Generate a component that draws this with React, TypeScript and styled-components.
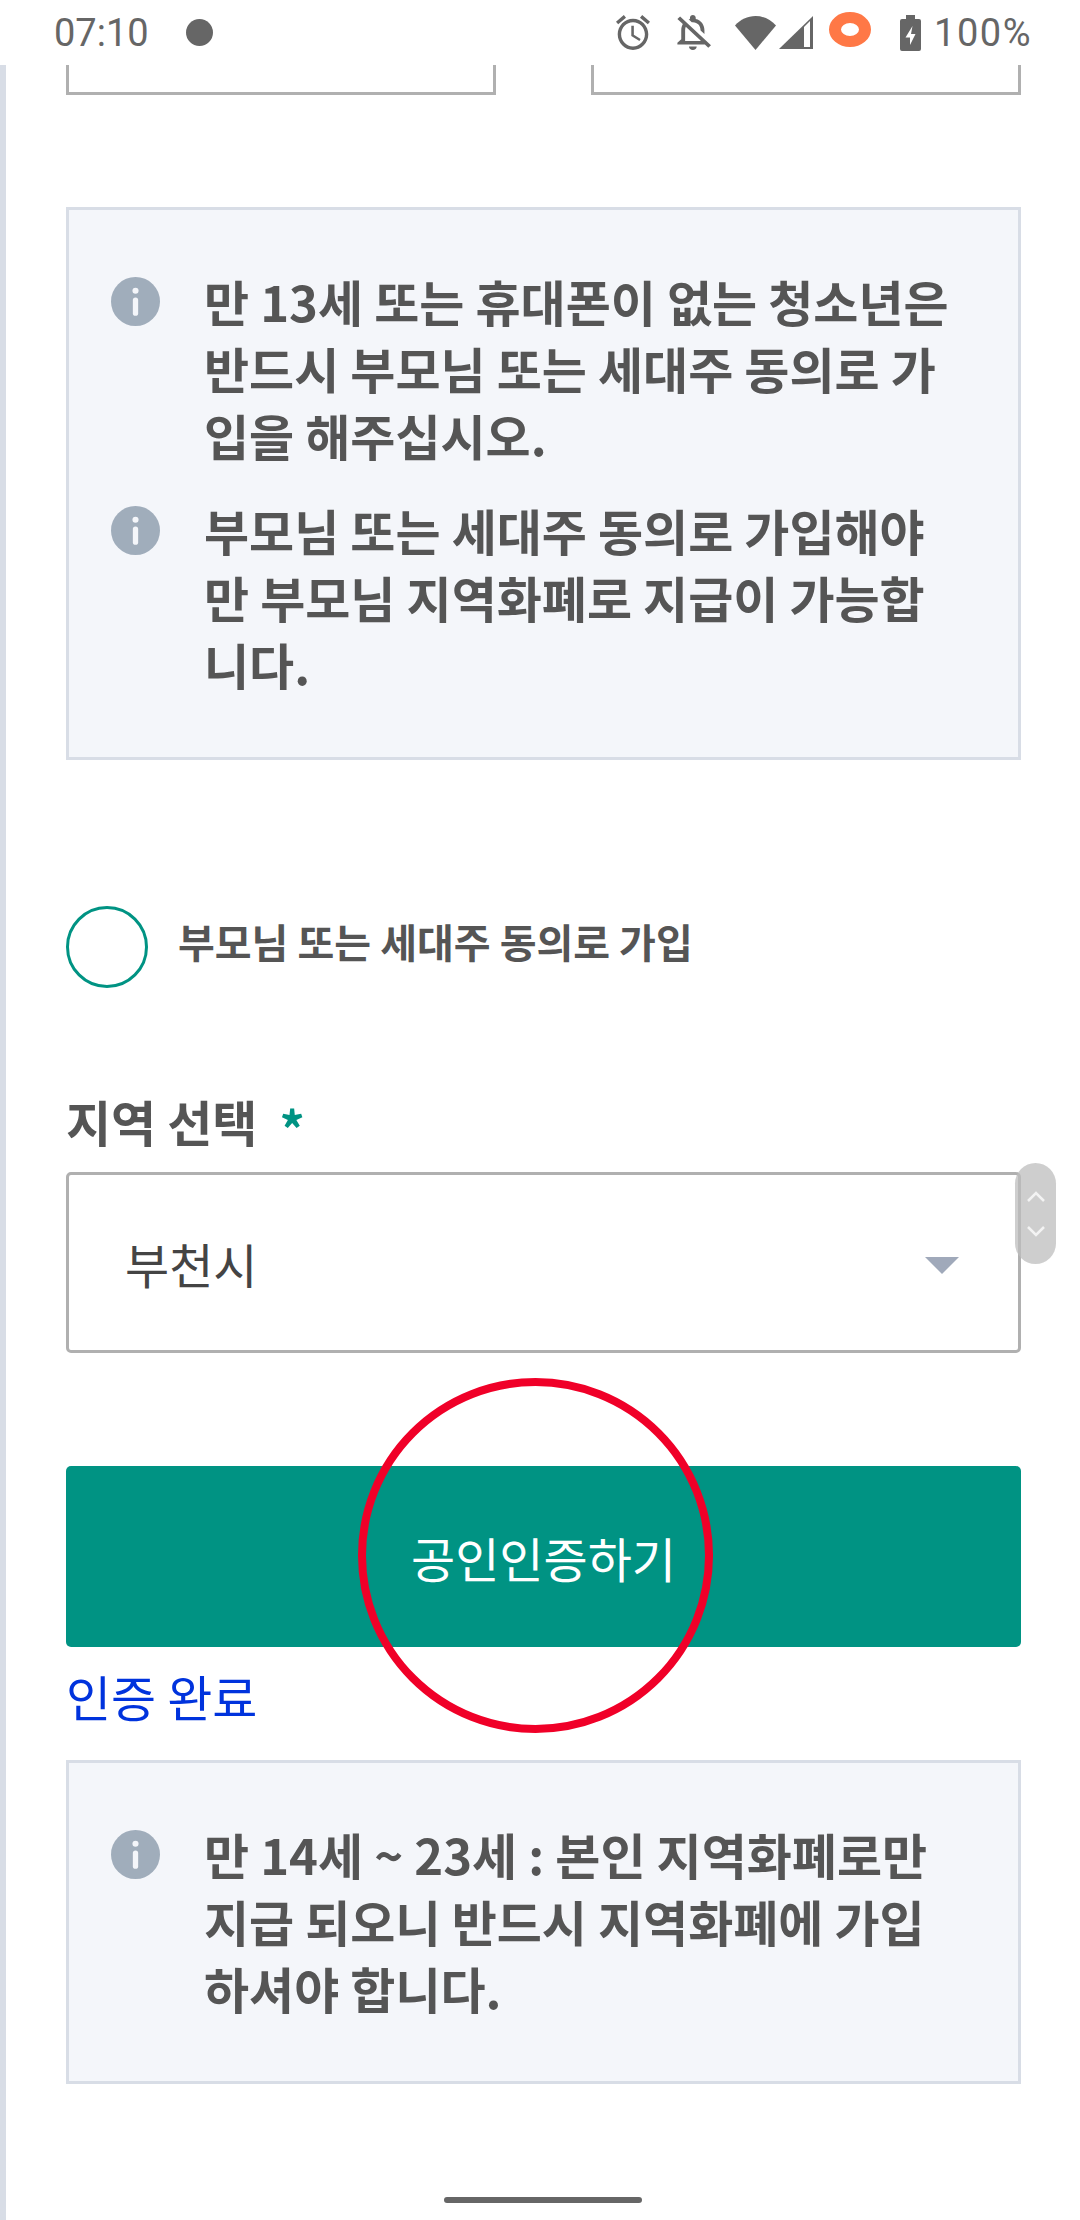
import styled, { createGlobalStyle } from 'styled-components'

const GlobalStyle = createGlobalStyle`
  html, body {
    margin: 0;
    padding: 0;
    background: #ffffff;
  }
  * {
    box-sizing: border-box;
  }
`

const KR = `"Noto Sans CJK KR", "Noto Sans", sans-serif`

const InfoIcon = () => (
  <InfoSvg viewBox="0 0 48 48">
    <circle cx="24" cy="24" r="24" fill="#a0adbb" />
    <circle cx="24" cy="13.5" r="3" fill="#f4f6fa" />
    <rect x="21.4" y="20" width="5.2" height="18" rx="2.6" fill="#f4f6fa" />
  </InfoSvg>
)

const Notes = ({ items }: { items: string[] }) => (
  <>
    {items.map((t) => (
      <Note key={t}>
        <InfoIcon />
        <NoteText>{t}</NoteText>
      </Note>
    ))}
  </>
)

export const App = () => {
  return (
    <Screen>
      <GlobalStyle />
      <StatusBar>
        <Time>07:10</Time>
        <Dot />
        <StatusRight>
          <svg width="34" height="35" viewBox="2 1.860 20 20.140" preserveAspectRatio="none" fill="#666">
            <path d="M22 5.720l-4.600-3.860-1.290 1.530 4.600 3.860L22 5.720zM7.880 3.390L6.600 1.860 2 5.710l1.290 1.530 4.590-3.850zM12.500 8H11v6l4.750 2.850.75-1.230-4-2.370V8zM12 4c-4.970 0-9 4.030-9 9s4.030 9 9 9 9-4.030 9-9-4.030-9-9-9zm0 16c-3.870 0-7-3.130-7-7s3.130-7 7-7 7 3.130 7 7-3.130 7-7 7z" />
          </svg>
          <BellSvg width="34" height="35" viewBox="3.800 2.500 17.600 19.500" preserveAspectRatio="none" fill="#666">
            <path d="M12 22c1.100 0 2-.9 2-2h-4c0 1.100.9 2 2 2zm0-15.500c2.490 0 4 2.020 4 4.500v.1l2 2V11c0-3.070-1.630-5.640-4.500-6.320V4c0-.83-.67-1.500-1.500-1.500s-1.500.67-1.500 1.500v.68c-.24.06-.47.15-.69.23l1.640 1.640c.18-.02.36-.05.55-.05zM5.410 3.350L4 4.760l2.810 2.810C6.290 8.570 6 9.740 6 11v5l-2 2v1h14.240l1.740 1.740 1.410-1.410L5.410 3.350zM16 17H8v-6c0-.68.12-1.320.34-1.900L16 16.760V17z" />
          </BellSvg>
          <WifiSvg width="41" height="34" viewBox="0 0 41 34">
            <path d="M20.500 34L0 9.500C5.500 3.500 12.500 0 20.500 0S35.500 3.500 41 9.500z" fill="#666" />
          </WifiSvg>
          <SignalSvg width="34" height="33" viewBox="0 0 34 33">
            <path d="M34 0v33H0z" fill="#666" />
            <path d="M25 11l6-6v26h-6z" fill="#fff" />
          </SignalSvg>
          <Ring />
          <BatterySvg width="21" height="36" viewBox="0 0 21 36">
            <path d="M6 0h9v4h4a2 2 0 0 1 2 2v28a2 2 0 0 1-2 2H2a2 2 0 0 1-2-2V6a2 2 0 0 1 2-2h4z" fill="#666" />
            <path d="M12.500 11L5.500 22.500h4.500V30l5.500-11h-4.500z" fill="#fff" />
          </BatterySvg>
          <Percent>100%</Percent>
        </StatusRight>
      </StatusBar>

      <Page>
        <TopInputs>
          <CutInput />
          <CutInput />
        </TopInputs>

        <NoticeBox $top="112px">
          <Notes
            items={[
              '만 13세 또는 휴대폰이 없는 청소년은 반드시 부모님 또는 세대주 동의로 가입을 해주십시오.',
              '부모님 또는 세대주 동의로 가입해야만 부모님 지역화폐로 지급이 가능합니다.',
            ]}
          />
        </NoticeBox>

        <RadioRow>
          <Radio />
          <RadioLabel>부모님 또는 세대주 동의로 가입</RadioLabel>
        </RadioRow>

        <FieldLabel>
          지역 선택<Star>*</Star>
        </FieldLabel>

        <SelectBox>
          <SelectValue>부천시</SelectValue>
          <SelectArrow />
          <ScrollHandle>
            <svg width="18" height="46" viewBox="0 0 18 46" fill="none" stroke="#f3f3f3" strokeWidth="2.500">
              <path d="M1 10l8-8 8 8M1 36l8 8 8-8" />
            </svg>
          </ScrollHandle>
        </SelectBox>

        <CertButton>공인인증하기</CertButton>
        <Done>인증 완료</Done>

        <NoticeBox $top="31px">
          <Notes items={['만 14세 ~ 23세 : 본인 지역화폐로만 지급 되오니 반드시 지역화폐에 가입하셔야 합니다.']} />
        </NoticeBox>
      </Page>

      <RedCircle />
      <HomeBar />
    </Screen>
  )
}

export default App

const Screen = styled.div`
  position: relative;
  width: 1080px;
  height: 2220px;
  overflow: hidden;
  background: #ffffff;
  font-family: ${KR};
`

const StatusBar = styled.div`
  height: 65px;
  display: flex;
  align-items: center;
  padding: 0 48px 0 54px;
  color: #666666;
`

const Time = styled.span`
  font-family: Roboto, sans-serif;
  font-size: 38px;
`

const Dot = styled.span`
  width: 27px;
  height: 27px;
  margin-left: 37px;
  border-radius: 50%;
  background: #666666;
`

const StatusRight = styled.div`
  margin-left: auto;
  display: flex;
  align-items: center;
`

const BellSvg = styled.svg`
  margin-left: 27px;
`

const WifiSvg = styled.svg`
  margin-left: 24px;
`

const SignalSvg = styled.svg`
  margin-left: 3px;
`

const Ring = styled.span`
  width: 42px;
  height: 35px;
  margin: -6px 0 0 16px;
  border-radius: 50%;
  border-style: solid;
  border-width: 11px 12px;
  border-color: #ff7846;
`

const BatterySvg = styled.svg`
  margin-left: 29px;
`

const Percent = styled.span`
  margin-left: 13px;
  font-family: Roboto, sans-serif;
  font-size: 38px;
  letter-spacing: 1.500px;
`

const Page = styled.div`
  height: 2155px;
  padding: 0 59px 0 66px;
  background: linear-gradient(#d8dde6, #d8dde6) left top / 6px 100% no-repeat;
`

const TopInputs = styled.div`
  display: grid;
  grid-template-columns: 430px 430px;
  justify-content: space-between;
`

const CutInput = styled.div`
  height: 30px;
  border: 3px solid #b0b0b0;
  border-top: none;
`

const NoticeBox = styled.div<{ $top: string }>`
  margin-top: ${(p) => p.$top};
  padding: 57px 58px 60px 42px;
  background: #f4f6fa;
  border: 3px solid #d8dde6;
`

const Note = styled.div`
  display: flex;
  align-items: flex-start;
  gap: 44px;
  & + & {
    margin-top: 28px;
  }
`

const InfoSvg = styled.svg`
  flex: none;
  width: 49px;
  height: 49px;
  margin-top: 10px;
`

const NoteText = styled.p`
  margin: 0;
  font-size: 49px;
  line-height: 67px;
  font-weight: 700;
  color: #555555;
`

const RadioRow = styled.div`
  margin-top: 146px;
  display: flex;
  align-items: center;
  gap: 30px;
`

const Radio = styled.span`
  width: 82px;
  height: 82px;
  border-radius: 50%;
  border: 3px solid #009383;
`

const RadioLabel = styled.span`
  margin-top: -12px;
  font-size: 40px;
  font-weight: 700;
  color: #555555;
`

const FieldLabel = styled.div`
  margin-top: 100px;
  height: 66px;
  font-size: 49px;
  line-height: 66px;
  font-weight: 700;
  color: #555555;
`

const Star = styled.span`
  margin-left: 22px;
  font-size: 50px;
  font-weight: 700;
  vertical-align: -7px;
  color: #009383;
`

const SelectBox = styled.div`
  position: relative;
  margin-top: 18px;
  height: 181px;
  display: flex;
  align-items: center;
  justify-content: space-between;
  padding: 0 59px 0 56px;
  border: 3px solid #b0b0b0;
  border-radius: 5px;
`

const SelectValue = styled.span`
  font-size: 48px;
  color: #444444;
`

const SelectArrow = styled.span`
  width: 0;
  height: 0;
  margin-top: 6px;
  border-left: 17px solid transparent;
  border-right: 17px solid transparent;
  border-top: 17px solid #a0a9ba;
`

const ScrollHandle = styled.div`
  position: absolute;
  top: -12px;
  right: -38px;
  width: 41px;
  height: 101px;
  display: flex;
  align-items: center;
  justify-content: center;
  border-radius: 21px;
  background: rgba(190, 190, 190, 0.75);
`

const CertButton = styled.div`
  margin-top: 113px;
  height: 181px;
  display: flex;
  align-items: center;
  justify-content: center;
  border-radius: 5px;
  background: #009383;
  color: #ffffff;
  font-size: 48px;
`

const Done = styled.div`
  margin-top: 16px;
  font-size: 49px;
  line-height: 66px;
  color: #0033dd;
`

const RedCircle = styled.div`
  position: absolute;
  left: 358px;
  top: 1378px;
  width: 355px;
  height: 355px;
  border-radius: 50%;
  border: 8px solid #f00028;
`

const HomeBar = styled.div`
  position: absolute;
  left: 444px;
  top: 2197px;
  width: 198px;
  height: 6px;
  border-radius: 3px;
  background: #666666;
`
